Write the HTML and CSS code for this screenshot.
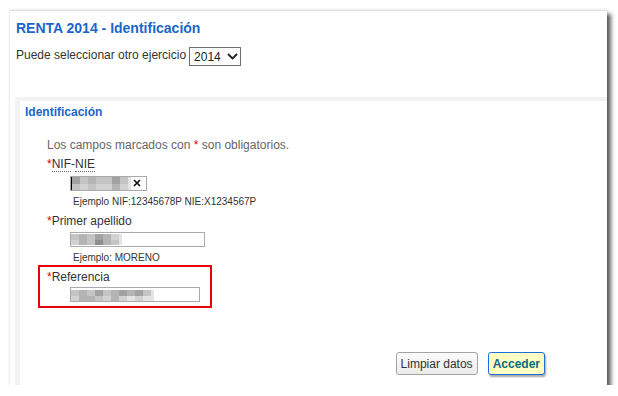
FILE: index.html
```html
<!DOCTYPE html>
<html lang="es">
<head>
<meta charset="utf-8">
<title>RENTA 2014 - Identificación</title>
<link rel="stylesheet" href="styles.css">
</head>
<body>
<div class="frame">
  <h1 class="title">RENTA 2014 - Identificación</h1>
  <div class="year-row">
    <span class="lbl">Puede seleccionar otro ejercicio</span>
    <span class="select"><span>2014</span><svg class="chev" width="11" height="7" viewBox="0 0 11 7"><polyline points="1,1 5.5,5.5 10,1" fill="none" stroke="#222" stroke-width="1.8"/></svg></span>
  </div>
  <div class="panel">
    <h2 class="panel-title">Identificación</h2>
    <div class="form">
      <p class="note">Los campos marcados con <span class="req">*</span> son obligatorios.</p>
      <div class="field field-nif">
        <div class="label"><span class="req">*</span><abbr class="ab">NIF</abbr>-<abbr class="ab">NIE</abbr></div>
        <div class="input input-nif">
          <span class="caret"></span>
          <span class="blur blur-nif">
            <i class="s2"></i><i class="s4"></i><i class="s3"></i><i class="s4"></i><i class="s4"></i><i class="s2"></i><i class="s4"></i><i class="s6"></i>
            <i class="s4"></i><i class="s5"></i><i class="s4"></i><i class="s5"></i><i class="s5"></i><i class="s3"></i><i class="s5"></i><i class="s6"></i>
          </span>
          <svg class="clear" width="8" height="8" viewBox="0 0 8 8"><path d="M1 1L7 7M7 1L1 7" stroke="#111" stroke-width="1.7"/></svg>
        </div>
        <div class="example">Ejemplo NIF:12345678P NIE:X1234567P</div>
      </div>
      <div class="field field-apellido">
        <div class="label"><span class="req">*</span>Primer apellido</div>
        <div class="input input-apellido">
          <span class="blur blur-apellido">
            <i class="s4"></i><i class="s3"></i><i class="s4"></i><i class="s2"></i><i class="s3"></i><i class="s5"></i><i class="s6"></i>
            <i class="s5"></i><i class="s3"></i><i class="s4"></i><i class="s1"></i><i class="s3"></i><i class="s4"></i><i class="s6"></i>
          </span>
        </div>
        <div class="example">Ejemplo: MORENO</div>
      </div>
      <div class="field field-ref">
        <div class="label"><span class="req">*</span>Referencia</div>
        <div class="input input-ref">
          <span class="blur blur-ref">
            <i class="s4"></i><i class="s3"></i><i class="s4"></i><i class="s2"></i><i class="s4"></i><i class="s3"></i><i class="s2"></i><i class="s3"></i><i class="s2"></i><i class="s4"></i><i class="s6"></i>
            <i class="s5"></i><i class="s3"></i><i class="s3"></i><i class="s4"></i><i class="s5"></i><i class="s3"></i><i class="s5"></i><i class="s6"></i><i class="s5"></i><i class="s6"></i><i class="s6"></i>
          </span>
        </div>
      </div>
    </div>
    <div class="actions">
      <button class="btn" type="button">Limpiar datos</button>
      <button class="btn btn-primary" type="button">Acceder</button>
    </div>
  </div>
</div>
</body>
</html>
```
FILE: styles.css
```css
body {
  margin: 0;
  background: #fff;
  font-family: "Liberation Sans", Arial, sans-serif;
  color: #333;
}

.frame {
  box-sizing: border-box;
  margin: 10px 0 0 10px;
  width: 597px;
  height: 375px;
  border-top: 1px solid #e3e3e3;
  background: #fff;
  box-shadow: 0 0 2px rgba(0, 0, 0, 0.2), 4px 4px 4px rgba(0, 0, 0, 0.62);
  display: flex;
  flex-direction: column;
}

.title {
  margin: 0;
  padding: 9px 0 0 6px;
  font-size: 14px;
  line-height: 16px;
  font-weight: bold;
  color: #1b66c9;
}

.year-row {
  display: flex;
  align-items: flex-start;
  gap: 3px;
  margin-top: 11px;
  padding-left: 6px;
  font-size: 12px;
  line-height: 14px;
  color: #333;
}

.year-row .lbl {
  margin-top: 1px;
}

.select {
  box-sizing: border-box;
  width: 52px;
  height: 19px;
  border: 1px solid #6f6f6f;
  display: flex;
  align-items: center;
  justify-content: space-between;
  padding: 0 2px 0 4px;
  font-size: 12px;
  color: #222;
}

.chev {
  display: block;
}

.panel {
  margin: 31px 0 0 5px;
  flex: 1;
  border-top: 4px solid #f2f2f2;
  border-left: 5px solid #f2f2f2;
  border-top-left-radius: 3px;
  display: flex;
  flex-direction: column;
}

.panel-title {
  margin: 0;
  padding: 4px 0 0 5px;
  font-size: 12px;
  line-height: 14px;
  font-weight: bold;
  color: #1b66c9;
}

.form {
  padding-left: 18px;
  font-size: 12px;
  line-height: 14px;
}

.note {
  margin: 19px 0 0;
  padding-left: 9px;
  color: #666;
}

.req {
  color: #e00000;
}

.field {
  padding-left: 9px;
}

.label {
  color: #333;
}

.ab {
  text-decoration: none;
  border-bottom: 1px dotted #666;
}

.field-nif {
  margin-top: 5px;
}

.input {
  box-sizing: border-box;
  height: 15px;
  border: 1px solid #aaa;
  margin: 5px 0 0 23px;
  display: flex;
  align-items: flex-start;
  background: #fff;
}

.input-nif {
  width: 77px;
}

.caret {
  width: 1px;
  align-self: stretch;
  background: #000;
}

.blur {
  display: grid;
  grid-template-rows: 6px 5px;
  margin-top: 1px;
}

.blur i {
  display: block;
}

.blur-nif {
  margin-top: 0;
  grid-template-rows: 7px 6px;
  grid-template-columns: repeat(7, 8px) 3px;
}

.blur-apellido {
  grid-template-columns: repeat(6, 8px) 3px;
}

.blur-ref {
  margin-top: 2px;
  grid-template-columns: repeat(10, 8px) 3px;
}

.s1 { background: #8e8e8e; }
.s2 { background: #a2a2a2; }
.s3 { background: #b4b4b4; }
.s4 { background: #c4c4c4; }
.s5 { background: #d2d2d2; }
.s6 { background: #e4e4e4; }

.clear {
  display: block;
  margin: 2px 5px 0 auto;
}

.example {
  margin-top: 5px;
  padding-left: 26px;
  font-size: 10px;
  line-height: 12px;
  color: #333;
}

.field-apellido {
  margin-top: 6px;
}

.input-apellido {
  margin-top: 4px;
  width: 135px;
}

.field-ref {
  margin-top: 1px;
  width: 174px;
  box-sizing: border-box;
  border: 2px solid #e8000b;
  padding: 3px 0 4px 7px;
}

.input-ref {
  margin-top: 3px;
  width: 130px;
}

.actions {
  margin-top: auto;
  display: flex;
  justify-content: flex-end;
  gap: 10px;
  padding: 0 62px 10px 0;
}

.btn {
  box-sizing: border-box;
  height: 23px;
  margin: 0;
  font-family: "Liberation Sans", Arial, sans-serif;
  font-size: 12px;
  line-height: 14px;
  color: #333;
  background: linear-gradient(#fbfbfb, #ebebeb);
  border: 1px solid #a3a3a3;
  border-radius: 3px;
  padding: 0 4px;
}

.btn-primary {
  font-weight: bold;
  color: #0c6a82;
  background: #ffffc4;
  border-color: #1f6fd6;
  box-shadow: 1px 2px 2px rgba(0, 0, 0, 0.35);
}
```
